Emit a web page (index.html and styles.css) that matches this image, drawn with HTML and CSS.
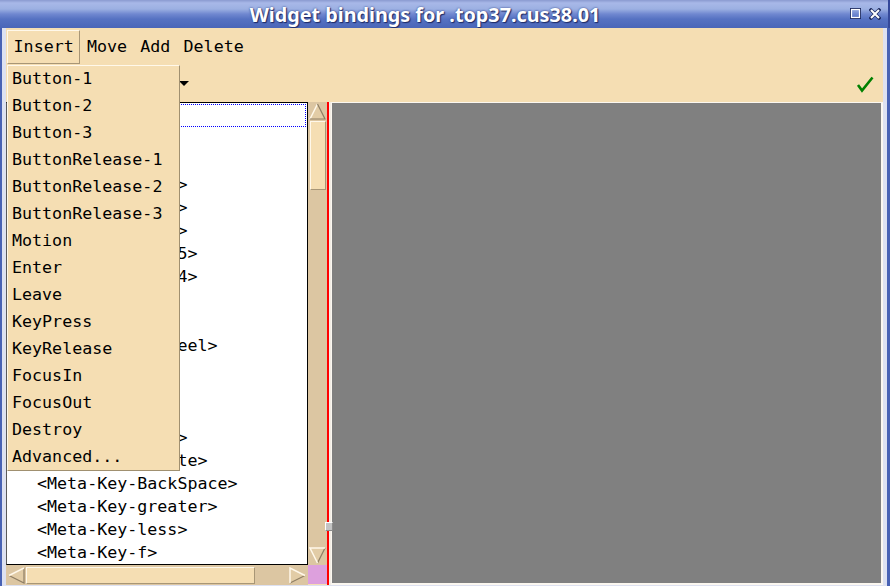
FILE: index.html
```html
<!DOCTYPE html>
<html>
<head>
<meta charset="utf-8">
<link rel="stylesheet" href="styles.css">
</head>
<body>
<div class="win">
  <div class="titlebar">
    <div class="title">Widget bindings for .top37.cus38.01</div>
    <div class="tbtns">
      <svg class="tb-max" width="11" height="11" viewBox="0 0 11 11"><rect x="1" y="1" width="9" height="9" fill="none" stroke="#1c2a60" stroke-width="2"/><rect x="1.5" y="1.5" width="8" height="8" fill="none" stroke="#ffffff" stroke-width="1.2"/></svg>
      <svg class="tb-close" width="12" height="12" viewBox="0 0 12 12"><path d="M2 2 L10 10 M10 2 L2 10" stroke="#1c2a60" stroke-width="3.4" stroke-linecap="square"/><path d="M2 2 L10 10 M10 2 L2 10" stroke="#ffffff" stroke-width="2"/></svg>
    </div>
  </div>
  <div class="frame">
    <div class="content">
      <div class="menubar">
        <span class="mb active">Insert</span>
        <span class="mb">Move</span>
        <span class="mb">Add</span>
        <span class="mb">Delete</span>
      </div>
      <div class="toolrow">
        <svg class="optarrow" width="10" height="6" viewBox="0 0 10 6"><polygon points="0,0 10,0 5,5" fill="#000"/></svg>
        <span class="spacer"></span>
        <svg class="check" width="18" height="17" viewBox="0 0 18 17"><polyline points="2,9 6,14.5 16.5,1.5" fill="none" stroke="#008000" stroke-width="2.6" stroke-linejoin="miter"/></svg>
      </div>
      <div class="main">
        <div class="listcol">
          <div class="listrow">
            <div class="listbox">
              <div class="item top activeitem">Text</div>
              <div class="item">&lt;MouseWheel&gt;</div>
              <div class="item">&lt;B1-Motion&gt;</div>
              <div class="item">&lt;Control-Key-a&gt;</div>
              <div class="item">&lt;Control-Key-b&gt;</div>
              <div class="item">&lt;Control-Key-d&gt;</div>
              <div class="item">&lt;Shift-Button-5&gt;</div>
              <div class="item">&lt;Shift-Button-4&gt;</div>
              <div class="item">&lt;Button-5&gt;</div>
              <div class="item">&lt;Button-4&gt;</div>
              <div class="item">&lt;Shift-MouseWheel&gt;</div>
              <div class="item">&lt;MouseWheel&gt;</div>
              <div class="item">&lt;Meta-Key-b&gt;</div>
              <div class="item">&lt;Meta-Key-d&gt;</div>
              <div class="item">&lt;Meta-Key-Left&gt;</div>
              <div class="item">&lt;Meta-Key-Delete&gt;</div>
              <div class="item">&lt;Meta-Key-BackSpace&gt;</div>
              <div class="item">&lt;Meta-Key-greater&gt;</div>
              <div class="item">&lt;Meta-Key-less&gt;</div>
              <div class="item">&lt;Meta-Key-f&gt;</div>
            </div>
            <div class="vscroll">
              <svg class="arr" width="17" height="17" viewBox="0 0 17 17"><polygon points="8.5,1 16,16 1,16" fill="#e2cca6"/><polyline points="1,16 8.5,1" fill="none" stroke="#fff8ea" stroke-width="1.5"/><polyline points="8.5,1 16,16 1,16" fill="none" stroke="#8e7e64" stroke-width="1.2"/></svg>
              <div class="vslider"></div>
              <div class="spacer"></div>
              <svg class="arr" width="17" height="17" viewBox="0 0 17 17"><polygon points="1,1 16,1 8.5,16" fill="#e2cca6"/><polyline points="8.5,16 16,1" fill="none" stroke="#8e7e64" stroke-width="1.2"/><polyline points="8.5,16 1,1 16,1" fill="none" stroke="#fff8ea" stroke-width="1.5"/></svg>
            </div>
          </div>
          <div class="hrow">
            <div class="hscroll">
              <svg class="arr" width="17" height="17" viewBox="0 0 17 17"><polygon points="1,8.5 16,1 16,16" fill="#e2cca6"/><polyline points="16,1 16,16 1,8.5" fill="none" stroke="#8e7e64" stroke-width="1.2"/><polyline points="1,8.5 16,1" fill="none" stroke="#fff8ea" stroke-width="1.5"/></svg>
              <div class="hslider"></div>
              <div class="spacer"></div>
              <svg class="arr" width="17" height="17" viewBox="0 0 17 17"><polygon points="16,8.5 1,1 1,16" fill="#e2cca6"/><polyline points="1,16 16,8.5" fill="none" stroke="#8e7e64" stroke-width="1.2"/><polyline points="16,8.5 1,1 1,16" fill="none" stroke="#fff8ea" stroke-width="1.5"/></svg>
            </div>
            <div class="corner"></div>
          </div>
        </div>
        <div class="sash"></div>
        <div class="canvas"></div>
      </div>
    </div>
  </div>
  <div class="sashhandle"></div>
  <div class="menu">
    <div class="mi">Button-1</div>
    <div class="mi">Button-2</div>
    <div class="mi">Button-3</div>
    <div class="mi">ButtonRelease-1</div>
    <div class="mi">ButtonRelease-2</div>
    <div class="mi">ButtonRelease-3</div>
    <div class="mi">Motion</div>
    <div class="mi">Enter</div>
    <div class="mi">Leave</div>
    <div class="mi">KeyPress</div>
    <div class="mi">KeyRelease</div>
    <div class="mi">FocusIn</div>
    <div class="mi">FocusOut</div>
    <div class="mi">Destroy</div>
    <div class="mi">Advanced...</div>
  </div>
</div>
</body>
</html>
```

FILE: styles.css
```css
* { box-sizing: border-box; }
html, body {
  margin: 0;
  padding: 0;
  width: 890px;
  height: 586px;
  overflow: hidden;
  background: #ffffff;
}
body {
  font-family: "DejaVu Sans Mono", "Liberation Mono", monospace;
  font-size: 16.67px;
  color: #000;
}
.win {
  position: relative;
  width: 890px;
  height: 586px;
  background: #4862b4;
  display: flex;
  flex-direction: column;
  padding: 0 3px 3px 2px;
}
.titlebar {
  height: 28px;
  margin: 0 -3px 0 -2px;
  display: grid;
  grid-template-columns: 1fr 38px;
  align-items: center;
  background: linear-gradient(#8a9ad0 0px, #a8b8e8 3px, #9cb0e2 9px, #7088d0 14px, #5672c2 19px, #4a66b8 28px);
  border-right: 2px solid #34489a;
}
.title {
  text-align: center;
  font-family: "Noto Sans", "Open Sans", sans-serif;
  font-weight: bold;
  font-size: 19.8px;
  color: #ffffff;
  text-shadow: 1px 1px 1px #1c2a66, 0 0 2px #2a3c80;
  line-height: 28px;
  padding-top: 1px;
}
.tbtns {
  display: flex;
  align-items: center;
  gap: 8px;
  height: 28px;
  padding-bottom: 2px;
}
.frame {
  flex: 1;
  display: flex;
  background: #dde1f1;
  padding: 0 4px 3px 4px;
}
.content {
  flex: 1;
  display: flex;
  flex-direction: column;
  background: #f5deb3;
}
.menubar {
  height: 37px;
  display: flex;
  align-items: flex-start;
  padding: 2px 0 0 1px;
}
.mb {
  height: 34px;
  line-height: 32px;
  padding: 0 5.6px;
  border: 1px solid transparent;
}
.mb.active {
  border-color: #fff8ea #a89676 #a89676 #fff8ea;
}
.toolrow {
  height: 36px;
  display: flex;
  align-items: center;
}
.optarrow {
  margin-left: 173px;
  margin-top: 1px;
}
.spacer { flex: 1; }
.check {
  margin-right: 9px;
  margin-top: 2px;
}
.main {
  flex: 1;
  display: flex;
  padding-top: 1px;
}
.listcol {
  width: 321px;
  display: flex;
  flex-direction: column;
}
.listrow {
  flex: 1;
  display: flex;
}
.listbox {
  width: 302px;
  background: #ffffff;
  border: 1px solid #000000;
  border-left-color: #5a5a5a;
  overflow: hidden;
  padding-top: 1px;
}
.item {
  height: 23px;
  line-height: 23px;
  white-space: pre;
  padding-left: 30px;
}
.item.top { padding-left: 4px; }
.activeitem {
  outline: 1px dotted #0000ff;
  outline-offset: -1px;
  margin-right: 1px;
}
.vscroll {
  width: 19px;
  background: #dcc6a2;
  display: flex;
  flex-direction: column;
  padding: 1px 1px 1px 1px;
}
.arr { display: block; flex: none; }
.vslider {
  height: 69px;
  margin: 1px 0 0 1px;
  background: #f5deb3;
  border: 1px solid;
  border-color: #fff8ea #a89676 #a89676 #fff8ea;
}
.hrow {
  height: 20px;
  display: flex;
}
.hscroll {
  width: 302px;
  background: #dcc6a2;
  display: flex;
  align-items: center;
  padding: 0 2px 0 2px;
}
.hslider {
  width: 229px;
  height: 17px;
  margin-left: 1px;
  background: #f5deb3;
  border: 1px solid;
  border-color: #fff8ea #a89676 #a89676 #fff8ea;
}
.corner {
  width: 19px;
  height: 19px;
  background: #dda0dd;
}
.sash {
  width: 4px;
  border-left: 2px solid #ff0000;
  background: #f2ece4;
}
.canvas {
  flex: 1;
  background: #808080;
  border: 1px solid #fbf7f0;
  border-right-width: 2px;
  border-bottom-width: 2px;
}
.sashhandle {
  position: absolute;
  left: 325px;
  top: 522px;
  width: 8px;
  height: 9px;
  background: #c4c4c4;
  border-top: 1px solid #ffffff;
  border-left: 1px solid #ffffff;
  border-right: 1px solid #8a8a8a;
  border-bottom: 1px solid #8a8a8a;
}
.menu {
  position: absolute;
  left: 7px;
  top: 65px;
  width: 173px;
  height: 406px;
  background: #f5deb3;
  border: 1px solid;
  border-color: #fff8ea #a09070 #a09070 #fff8ea;
}
.mi {
  height: 27px;
  line-height: 26px;
  padding-left: 4px;
  white-space: pre;
}
```
